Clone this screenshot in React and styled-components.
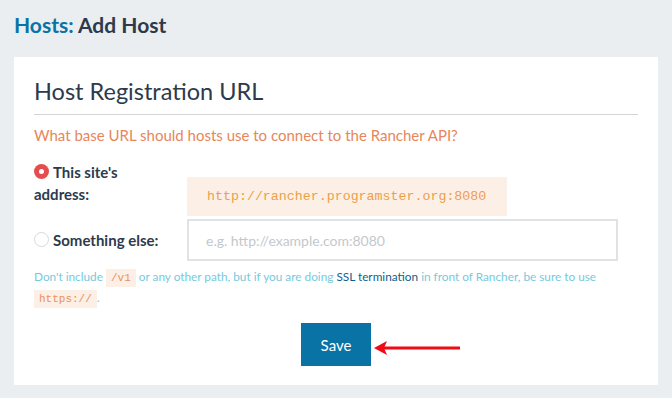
import React, { useState } from 'react';
import styled, { createGlobalStyle } from 'styled-components';

const GlobalStyle = createGlobalStyle`
  body {
    margin: 0;
    background: #ebeef0;
    font-family: Lato, "Open Sans", sans-serif;
  }
`

const Page = styled.div`
  padding: 11px 14px 0;
`
const Title = styled.h1`
  margin: 0 0 18px;
  font-size: 21px;
  line-height: 28px;
  font-weight: 700;
  color: #2d3a4b;
  span { color: #0a73a6; }
`
const Card = styled.div`
  background: #fff;
  padding: 20px 20px 19px;
`
const Heading = styled.h2`
  margin: 0;
  padding: 0 0 9px;
  font-size: 23.5px;
  line-height: 28px;
  font-weight: 400;
  color: #2d3a4b;
  border-bottom: 1px solid #d3d5d6;
`
const Question = styled.p`
  margin: 0;
  padding: 10px 0 16px;
  font-size: 15px;
  line-height: 20px;
  color: #e8865a;
`
const Row = styled.div`
  display: grid;
  grid-template-columns: 153px 431px;
  align-items: ${p => p.top ? 'start' : 'center'};
  margin-top: ${p => p.gap || 0}px;
`
const RadioLabel = styled.label`
  display: block;
  font-size: 15px;
  line-height: 22px;
  font-weight: 700;
  color: #2d3a4b;
  cursor: pointer;
`
const Radio = styled.span`
  display: inline-block;
  vertical-align: -1px;
  width: 15px;
  height: 15px;
  margin-right: 4px;
  box-sizing: border-box;
  border-radius: 50%;
  background: ${p => p.checked ? '#e34d4d' : '#fff'};
  border: ${p => p.checked ? 'none' : '1px solid #d7d9db'};
  position: relative;
  &::after {
    content: '';
    position: absolute;
    left: 5px;
    top: 5px;
    width: 5px;
    height: 5px;
    border-radius: 50%;
    background: ${p => p.checked ? '#fff' : 'transparent'};
  }
`
const Address = styled.div`
  margin-top: 16px;
  height: 39px;
  background: #fcefe6;
  width: 320px;
  padding-left: 20px;
  box-sizing: border-box;
  display: flex;
  align-items: center;
  font-family: "Liberation Mono", monospace;
  font-size: 13.3px;
  color: #eca04a;
`
const Input = styled.input`
  height: 42px;
  width: 431px;
  box-sizing: border-box;
  border: 2px solid #dfe3e5;
  padding: 0 17px;
  font-family: Lato, sans-serif;
  font-size: 14px;
  color: #2d3a4b;
  outline: none;
  &::placeholder { color: #c4c8cc; }
`
const Help = styled.p`
  margin: 6px 0 0;
  font-size: 11.8px;
  line-height: 19px;
  color: #76cadc;
`
const Code = styled.code`
  font-family: "Liberation Mono", monospace;
  font-size: 11px;
  color: #e9925b;
  background: #fcefe6;
  padding: 3px 5px;
`
const Link = styled.a`
  color: #0d5f8e;
  text-decoration: none;
`
const Footer = styled.div`
  display: flex;
  justify-content: center;
  margin-top: 14px;
`
const SaveWrap = styled.div`
  position: relative;
`
const SaveButton = styled.button`
  display: block;
  width: 70px;
  height: 43px;
  border: none;
  background: #0a73a6;
  color: #fff;
  font-family: Lato, sans-serif;
  font-size: 15px;
  cursor: pointer;
`
const Arrow = styled.svg`
  position: absolute;
  left: 73px;
  top: 17px;
`

const App = () => {
  const [choice, setChoice] = useState('site')

  return (<Page>
    <GlobalStyle />
    <Title><span>Hosts:</span> Add Host</Title>
    <Card>
      <Heading>Host Registration URL</Heading>
      <Question>What base URL should hosts use to connect to the Rancher API?</Question>
      <Row top>
        <RadioLabel onClick={() => setChoice('site')}>
          <Radio checked={choice === 'site'} />This site's<br />address:
        </RadioLabel>
        <Address>http://rancher.programster.org:8080</Address>
      </Row>
      <Row gap={3}>
        <RadioLabel onClick={() => setChoice('else')}>
          <Radio checked={choice === 'else'} />Something else:
        </RadioLabel>
        <Input placeholder="e.g. http://example.com:8080" />
      </Row>
      <Help>
        Don't include <Code>/v1</Code> or any other path, but if you are doing <Link href="#">SSL termination</Link> in front of Rancher, be sure to use <Code>https://</Code>.
      </Help>
      <Footer>
        <SaveWrap>
          <SaveButton>Save</SaveButton>
          <Arrow width="90" height="16" viewBox="0 0 90 16">
            <path d="M8 8 H86" stroke="#f00a14" strokeWidth="3" />
            <path d="M0 8 L13 1 L10 8 L13 15 Z" fill="#f00a14" />
          </Arrow>
        </SaveWrap>
      </Footer>
    </Card>
  </Page>);
}

export default App;
